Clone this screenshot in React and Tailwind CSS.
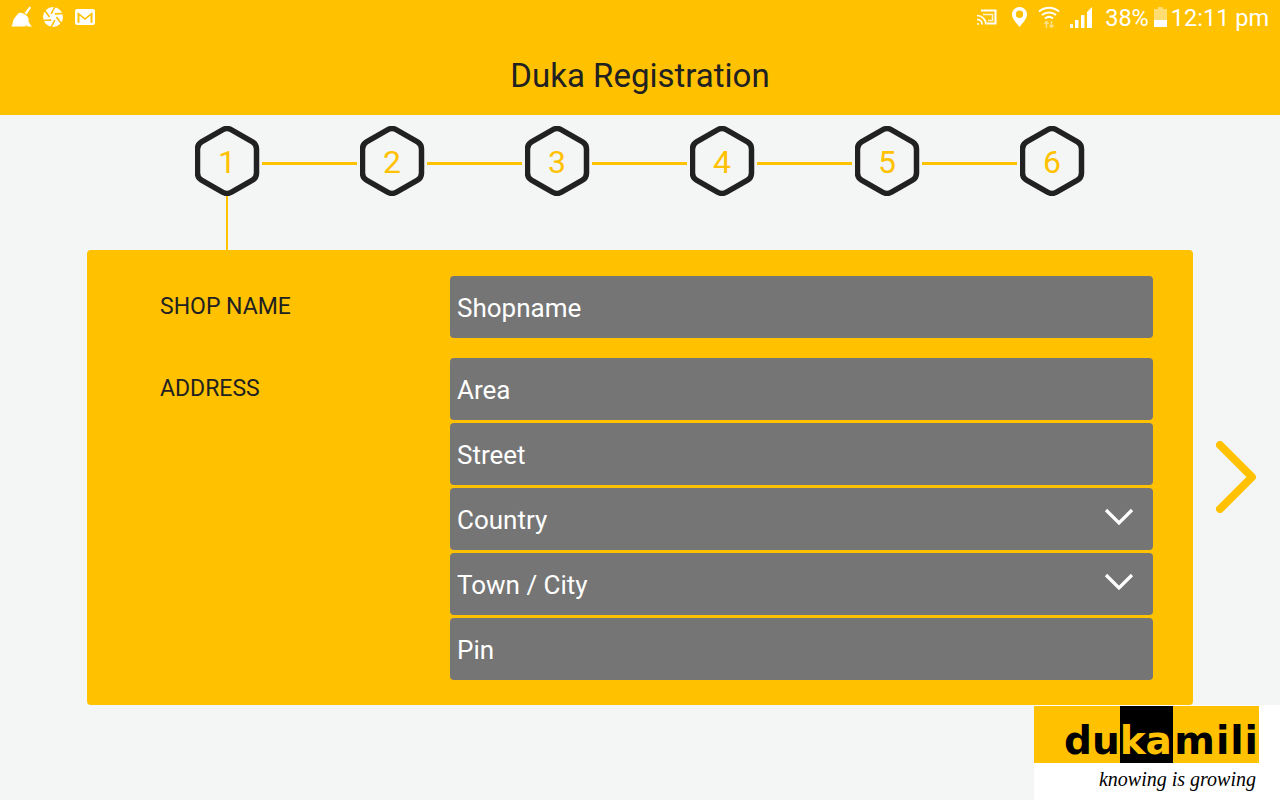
import React from 'react'

const STEPS = [1, 2, 3, 4, 5, 6]
const ADDRESS = [
  { label: 'Area' },
  { label: 'Street' },
  { label: 'Country', select: true },
  { label: 'Town / City', select: true },
  { label: 'Pin' },
]

function Broom() {
  return (
    <svg width="23" height="22" viewBox="0 0 23 22" className="ml-[10px]">
      <path d="M19.5 0.5 L21 1.8 L16.5 8.5 L14.5 7 Z" fill="#fff" />
      <path d="M9 7 C11 6 15 8 17.5 10.5 C19 12 18.5 14 18.5 15 C19 17 20.5 19 22 20.5 L17 20.5 L16 18.5 L15.5 20.5 L1 20.5 C3.5 19 2 16 4 13 C5.5 10.5 7 8.5 9 7 Z" fill="#fff" />
    </svg>
  )
}

function Aperture() {
  return (
    <svg width="22" height="22" viewBox="0 0 22 22" className="ml-[9px]">
      <circle cx="11" cy="11" r="10" fill="#fff" />
      <g stroke="#ffc100" strokeWidth="1.6">
        <path d="M7.5 11 L2 3.5" />
        <path d="M9.2 7.9 L13 0.5" />
        <path d="M12.8 7.9 L21.5 7.5" />
        <path d="M14.5 11 L20 18.5" />
        <path d="M12.8 14.1 L9 21.5" />
        <path d="M9.2 14.1 L0.5 14.5" />
      </g>
    </svg>
  )
}

function Mail() {
  return (
    <svg width="20" height="16" viewBox="0 0 20 16" className="ml-[11px]">
      <rect x="0" y="0" width="20" height="16" rx="2" fill="#fff" />
      <path d="M2.5 3 L10 9 L17.5 3 L17.5 13.8 L15.5 13.8 L15.5 6.5 L10 11 L4.5 6.5 L4.5 13.8 L2.5 13.8 Z" fill="#ffc100" />
    </svg>
  )
}

function Cast() {
  return (
    <svg width="20" height="16" viewBox="0 0 20 16" fill="none" stroke="#fff">
      <path d="M4 1.5 H18.5 V14.5 H10" strokeWidth="2" />
      <path d="M6 5.5 H15.5 V11.5 H11" strokeWidth="1.6" opacity="0.8" />
      <path d="M0 6.5 C5 6.5 9 10.5 9 15.5" strokeWidth="1.7" />
      <path d="M0 10.5 C3 10.5 5 12.5 5 15.5" strokeWidth="1.7" />
      <circle cx="1" cy="15" r="1" fill="#fff" stroke="none" />
    </svg>
  )
}

function Pin() {
  return (
    <svg width="15" height="20" viewBox="0 0 15 20" className="ml-[15px]">
      <path fillRule="evenodd" d="M7.5 0 C3.4 0 0 3.2 0 7.4 C0 12 5.5 17 7.5 20 C9.5 17 15 12 15 7.4 C15 3.2 11.6 0 7.5 0 Z M7.5 3.6 A3.7 3.7 0 1 1 7.5 11 A3.7 3.7 0 1 1 7.5 3.6 Z" fill="#fff" />
    </svg>
  )
}

function Wifi() {
  return (
    <svg width="22" height="22" viewBox="0 0 22 22" fill="none" stroke="#fff" className="ml-[11px]">
      <path d="M1 5.5 C7 0.5 15 0.5 21 5.5" strokeWidth="2" />
      <path d="M4 9 C8 5.5 14 5.5 18 9" strokeWidth="2" />
      <path d="M7 12.5 C9.5 10.5 12.5 10.5 15 12.5" strokeWidth="2" />
      <path d="M8.5 22 V16 M6.5 18 L8.5 15.5 L10.5 18 M13.5 15 V21 M11.5 19 L13.5 21.5 L15.5 19" strokeWidth="1.5" opacity="0.5" />
    </svg>
  )
}

function Signal() {
  return (
    <svg width="22" height="21" viewBox="0 0 22 21" fill="#fff" className="ml-[10px]">
      <rect x="0" y="17" width="3" height="4" opacity="0.9" />
      <rect x="5" y="13" width="3.5" height="8" />
      <rect x="11" y="8" width="3.5" height="13" />
      <path d="M17 5 L22 0 V21 H17 Z" />
    </svg>
  )
}

function Battery() {
  return (
    <svg width="13" height="20" viewBox="0 0 13 20" fill="#fff" className="ml-[5px]">
      <path d="M4 0 H9 V2 H13 V13 H0 V2 H4 Z" opacity="0.45" />
      <rect x="0" y="13" width="13" height="7" />
    </svg>
  )
}

function Hexagon({ n }) {
  return (
    <div className="relative w-[66px] h-[70px] shrink-0 flex items-center justify-center">
      <svg width="66" height="70" viewBox="0 0 66 70" className="absolute inset-0">
        <path d="M27.5 3.8 Q32 1.3 36.5 3.8 L57.5 15.8 Q61.5 18.2 61.5 23 L61.5 47 Q61.5 51.8 57.5 54.2 L36.5 66.2 Q32 68.7 27.5 66.2 L6.5 54.2 Q2.5 51.8 2.5 47 L2.5 23 Q2.5 18.2 6.5 15.8 Z"
          fill="none" stroke="#212121" strokeWidth="5.5" />
      </svg>
      <span className="relative text-[32px] leading-none text-[#ffc100] -ml-[1px] mt-[2px]">{n}</span>
    </div>
  )
}

function Field({ label, select }) {
  return (
    <div className="h-[62px] bg-[#757575] rounded-[4px] flex items-center justify-between pl-[7px] pr-[19px] text-white text-[26px] pt-[2px]">
      <span>{label}</span>
      {select && (
        <svg width="30" height="18" viewBox="0 0 30 18" fill="none" stroke="#fff" strokeWidth="3.2" className="-mt-[6px]">
          <path d="M2 2 L15 15 L28 2" />
        </svg>
      )}
    </div>
  )
}

export default function App() {
  return (
    <div className="w-[1280px] h-[800px] overflow-hidden bg-[#f4f6f5] font-['Roboto',sans-serif] flex flex-col">
      <div className="h-[115px] bg-[#ffc100] shrink-0">
        <div className="h-[34px] flex items-center justify-between pr-[11px]">
          <div className="flex items-center">
            <Broom />
            <Aperture />
            <Mail />
          </div>
          <div className="flex items-center text-white text-[23.5px] leading-none">
            <Cast />
            <Pin />
            <Wifi />
            <Signal />
            <span className="ml-[13px] pt-[3px]">38%</span>
            <Battery />
            <span className="ml-[4px] pt-[3px]">12:11 pm</span>
          </div>
        </div>
        <div className="text-center text-[#212121] text-[33px] leading-[38px] mt-[23px]">Duka Registration</div>
      </div>

      <div className="flex justify-center pt-[11px] shrink-0">
        {STEPS.map(n => (
          <React.Fragment key={n}>
            <Hexagon n={n} />
            {n < 6 && <div className="w-[95px] h-[3px] mx-[2px] mt-[36px] bg-[#ffc100] -translate-x-[1px]" />}
          </React.Fragment>
        ))}
      </div>
      <div className="w-[2px] h-[54px] ml-[226px] bg-[#ffc100] shrink-0" />

      <div className="flex items-center shrink-0">
        <div className="w-[1106px] ml-[87px] bg-[#ffc100] rounded-[4px] pt-[26px] pb-[25px] pr-[40px] pl-[73px] flex flex-col gap-[20px]">
          <div className="flex">
            <div className="w-[290px] shrink-0 text-[23px] leading-[62px] text-[#212121]">SHOP NAME</div>
            <div className="flex-1">
              <Field label="Shopname" />
            </div>
          </div>
          <div className="flex">
            <div className="w-[290px] shrink-0 text-[23px] leading-[62px] text-[#212121]">ADDRESS</div>
            <div className="flex-1 flex flex-col gap-[3px]">
              {ADDRESS.map(f => <Field key={f.label} label={f.label} select={f.select} />)}
            </div>
          </div>
        </div>
        <svg width="42" height="72" viewBox="0 0 42 72" fill="none" stroke="#ffc100" strokeWidth="8" strokeLinecap="round" strokeLinejoin="round" className="ml-[23px] -mt-[1px]">
          <path d="M4 4 L36 36 L4 68" />
        </svg>
      </div>

      <div className="ml-[1034px] flex-1 bg-white pt-[1px]">
        <div className="w-[225px] h-[57px] bg-[#ffc100] flex items-end pl-[30px] font-['DejaVu_Sans',sans-serif] font-bold text-[39px] leading-[45px] text-black">
          <span className="w-[56px]">du</span>
          <span className="w-[54px] h-[57px] bg-black text-[#ffc100] flex items-end">ka</span>
          <span className="pl-[1px] tracking-[1px]">mili</span>
        </div>
        <div className="text-right pr-[24px] pt-[6px] font-['Liberation_Serif',serif] italic text-[20px] leading-[20px] text-black">knowing is growing</div>
      </div>
    </div>
  )
}
